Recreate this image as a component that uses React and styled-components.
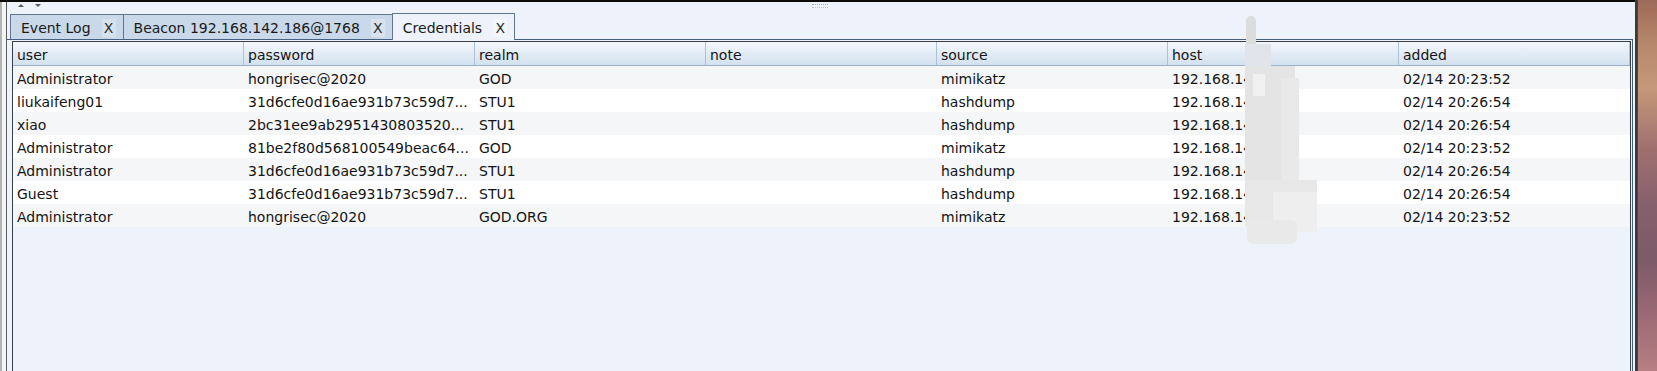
import React from 'react';
import styled, { createGlobalStyle } from 'styled-components';

const GlobalStyle = createGlobalStyle`
  html, body {
    margin: 0;
    padding: 0;
    background: #eef2fa;
  }
  body {
    font-family: "DejaVu Sans", Verdana, sans-serif;
    color: #141414;
    overflow: hidden;
  }
`;

const columns = ['user', 'password', 'realm', 'note', 'source', 'host', 'added'];

const credentials = [
  ['Administrator', 'hongrisec@2020', 'GOD', '', 'mimikatz', '192.168.142.186', '02/14 20:23:52'],
  ['liukaifeng01', '31d6cfe0d16ae931b73c59d7...', 'STU1', '', 'hashdump', '192.168.142.186', '02/14 20:26:54'],
  ['xiao', '2bc31ee9ab2951430803520...', 'STU1', '', 'hashdump', '192.168.142.186', '02/14 20:26:54'],
  ['Administrator', '81be2f80d568100549beac64...', 'GOD', '', 'mimikatz', '192.168.142.186', '02/14 20:23:52'],
  ['Administrator', '31d6cfe0d16ae931b73c59d7...', 'STU1', '', 'hashdump', '192.168.142.186', '02/14 20:26:54'],
  ['Guest', '31d6cfe0d16ae931b73c59d7...', 'STU1', '', 'hashdump', '192.168.142.186', '02/14 20:26:54'],
  ['Administrator', 'hongrisec@2020', 'GOD.ORG', '', 'mimikatz', '192.168.142.186', '02/14 20:23:52'],
];

const tabs = [
  { title: 'Event Log' },
  { title: 'Beacon 192.168.142.186@1768' },
  { title: 'Credentials', active: true },
];

const App = () => (
  <>
    <GlobalStyle />
    <Screen>
      <Window>
        <TitleEdge />
        <Body>
          <Frame>
            <SplitBar>
              <Arrows>
                <ArrowUp />
                <ArrowDown />
              </Arrows>
              <Grip />
              <span />
            </SplitBar>
            <TabStrip>
              {tabs.map((t) => (
                <Tab key={t.title} $active={t.active}>
                  <TabTitle>{t.title}</TabTitle>
                  <CloseBox $active={t.active}>X</CloseBox>
                </Tab>
              ))}
            </TabStrip>
            <Panel>
              <TableFrame>
                <HeaderRow>
                  {columns.map((c) => (
                    <HeaderCell key={c}>{c}</HeaderCell>
                  ))}
                </HeaderRow>
                {credentials.map((row, i) => (
                  <Row key={i} $odd={i % 2 === 0}>
                    {row.map((cell, j) => (
                      <Cell key={j}>{cell}</Cell>
                    ))}
                  </Row>
                ))}
              </TableFrame>
            </Panel>
          </Frame>
        </Body>
        <Redaction viewBox="0 0 80 232" width="80" height="232">
          <rect x="1" y="0" width="10" height="44" rx="5" fill="#dcdcdc" />
          <rect x="0" y="28" width="26" height="24" fill="#e1e5eb" />
          <rect x="0" y="50" width="50" height="130" fill="#e4e4e4" />
          <rect x="36" y="62" width="18" height="104" fill="#e9e9e9" />
          <rect x="8" y="58" width="12" height="22" fill="#f0f0f0" />
          <rect x="0" y="164" width="72" height="46" fill="#e7e7e7" />
          <rect x="28" y="176" width="44" height="40" fill="#eeeeee" />
          <rect x="2" y="204" width="50" height="24" rx="6" fill="#e9e9e9" />
        </Redaction>
      </Window>
      <Desktop />
    </Screen>
  </>
);

const Screen = styled.div`
  display: flex;
  width: 1657px;
  height: 371px;
  overflow: hidden;
`;

const Window = styled.div`
  position: relative;
  width: 1635px;
  display: flex;
  flex-direction: column;
  background: #eef2fa;
  border-right: 2px solid #3b3b3b;
`;

const TitleEdge = styled.div`
  height: 2px;
  background: #0a0a0a;
`;

const Body = styled.div`
  flex: 1;
  display: flex;
  border-left: 2px solid #b3b3b3;
  padding-left: 4px;
  background: #f3f4f6;
`;

const Frame = styled.div`
  flex: 1;
  display: flex;
  flex-direction: column;
  border-left: 1px solid #5a5a5a;
  background: #eef2fa;
  padding-right: 2px;
`;

const SplitBar = styled.div`
  height: 10px;
  display: grid;
  grid-template-columns: 1fr auto 1fr;
  align-items: start;
`;

const Arrows = styled.div`
  display: flex;
  gap: 11px;
  padding: 2px 0 0 11px;
`;

const ArrowUp = styled.div`
  width: 0;
  height: 0;
  border-left: 3px solid transparent;
  border-right: 3px solid transparent;
  border-bottom: 3px solid #5a5a5a;
`;

const ArrowDown = styled(ArrowUp)`
  border-bottom: none;
  border-top: 3px solid #5a5a5a;
`;

const Grip = styled.div`
  width: 16px;
  height: 2px;
  margin-top: 2px;
  border-top: 1px dotted #9fb0c6;
  border-bottom: 1px dotted #b9c6d6;
`;

const TabStrip = styled.div`
  height: 27px;
  display: flex;
  align-items: flex-end;
  padding-left: 3px;
`;

const Tab = styled.div`
  position: relative;
  z-index: ${(p) => (p.$active ? 2 : 1)};
  height: ${(p) => (p.$active ? 27 : 25)}px;
  margin-bottom: ${(p) => (p.$active ? -1 : 0)}px;
  margin-left: -1px;
  display: flex;
  align-items: center;
  gap: 11px;
  padding: 1px 7px 0 10px;
  box-sizing: border-box;
  background: ${(p) => (p.$active ? '#eef2fa' : '#c9d9ea')};
  border: 1px solid #62778f;
  border-bottom: none;
  font-size: 14px;
  color: #1a1a1a;
  &:first-child {
    margin-left: 0;
  }
`;

const TabTitle = styled.span`
  white-space: nowrap;
`;

const CloseBox = styled.span`
  width: 14px;
  height: 18px;
  display: flex;
  align-items: center;
  justify-content: center;
  background: ${(p) => (p.$active ? '#f3f6fb' : '#d6e2ee')};
  color: #2a2a2a;
`;

const Panel = styled.div`
  flex: 1;
  display: flex;
  border-top: 1px solid #46607f;
  border-right: 1px solid #3d5f86;
  padding: 1px 1px 0 5px;
`;

const TableFrame = styled.div`
  flex: 1;
  border: 1px solid #3a3f47;
  border-bottom: none;
  background: #eef2fa;
  font-size: 14px;
`;

const HeaderRow = styled.div`
  display: grid;
  grid-template-columns: repeat(7, 231px);
  height: 23px;
  border-bottom: 1px solid #98b3cf;
  background: linear-gradient(#f3f7fc, #d3e1ef);
`;

const HeaderCell = styled.div`
  display: flex;
  align-items: center;
  padding: 2px 0 0 4px;
  border-right: 1px solid #a9c1da;
  color: #151515;
`;

const Row = styled.div`
  display: grid;
  grid-template-columns: repeat(7, 231px);
  height: 23px;
  background: ${(p) => (p.$odd ? '#f5f6f8' : '#ffffff')};
`;

const Cell = styled.div`
  display: flex;
  align-items: center;
  padding: 2px 0 0 4px;
  white-space: nowrap;
  overflow: hidden;
  color: #141414;
`;

const Redaction = styled.svg`
  position: absolute;
  left: 1245px;
  top: 16px;
  z-index: 5;
`;

const Desktop = styled.div`
  flex: 1;
  border-left: 1px solid #4a4444;
  background: linear-gradient(
    #9c6a58 0%,
    #b8886c 12%,
    #c49878 24%,
    #a07070 40%,
    #86606c 55%,
    #7c5a68 70%,
    #9c6a74 85%,
    #b68084 100%
  );
`;

export default App;
